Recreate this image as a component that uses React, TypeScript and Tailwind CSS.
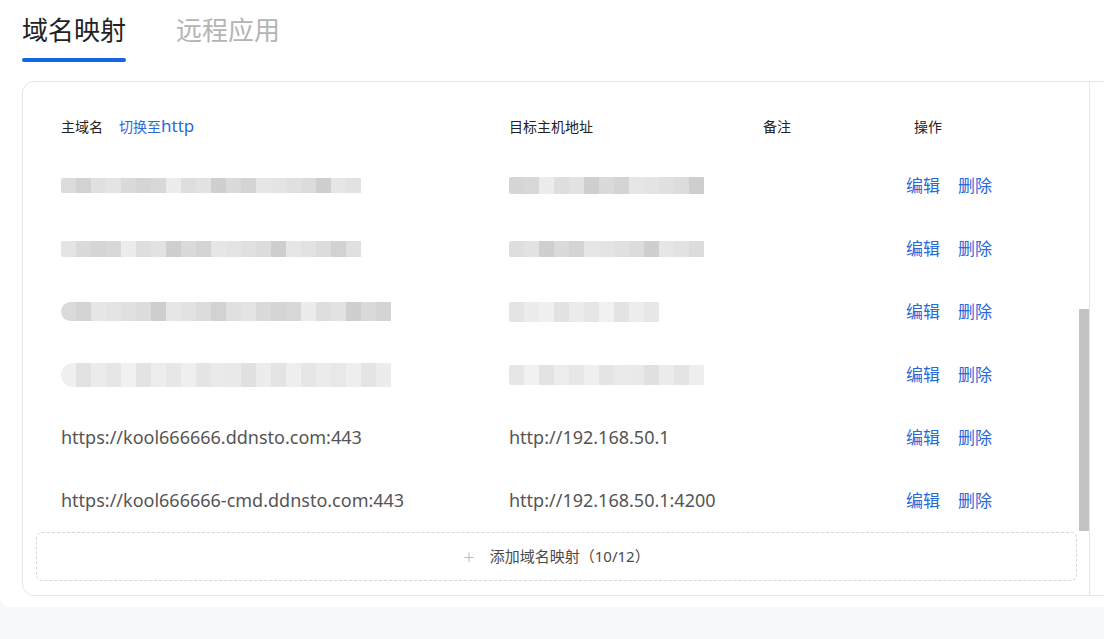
import React from "react";

const font = { fontFamily: '"Noto Sans", "Noto Sans CJK SC", sans-serif' };

// mosaic cells standing in for the blurred entries
const shadesA = ["bg-[#dcdcdc]", "bg-[#d2d2d2]", "bg-[#e0e0e0]", "bg-[#e4e4e4]", "bg-[#dadada]", "bg-[#d5d5d5]", "bg-[#d8d8d8]", "bg-[#ececec]", "bg-[#dedede]", "bg-[#e2e2e2]", "bg-[#cfcfcf]", "bg-[#dadada]", "bg-[#d4d4d4]", "bg-[#e6e6e6]", "bg-[#e4e4e4]", "bg-[#e0e0e0]", "bg-[#dcdcdc]", "bg-[#cecece]", "bg-[#e6e6e6]", "bg-[#e2e2e2]"];
const shadesB = ["bg-[#e8e8e8]", "bg-[#eeeeee]", "bg-[#e4e4e4]", "bg-[#ececec]", "bg-[#f0f0f0]", "bg-[#e2e2e2]", "bg-[#ebebeb]", "bg-[#e6e6e6]", "bg-[#f1f1f1]", "bg-[#e3e3e3]", "bg-[#ededed]", "bg-[#e7e7e7]", "bg-[#efefef]", "bg-[#e5e5e5]", "bg-[#eaeaea]", "bg-[#e9e9e9]", "bg-[#e1e1e1]", "bg-[#ececec]", "bg-[#e4e4e4]", "bg-[#eeeeee]", "bg-[#e6e6e6]", "bg-[#ebebeb]"];

function Mosaic({ n, h, shades, offset = 0, round = false }: { n: number; h: string; shades: string[]; offset?: number; round?: boolean }) {
  return (
    <div className={`flex ${h} overflow-hidden blur-[0.5px] ${round ? "rounded-full" : "rounded-[2px]"}`}>
      {Array.from({ length: n }).map((_, i) => (
        <div key={i} className={`w-[15px] h-full ${shades[(i + offset) % shades.length]}`} />
      ))}
    </div>
  );
}

type Row = { domain: React.ReactNode; target: React.ReactNode };

const rows: Row[] = [
  { domain: <Mosaic n={20} h="h-[15px]" shades={shadesA} />, target: <Mosaic n={13} h="h-[17px]" shades={shadesA} offset={5} /> },
  { domain: <Mosaic n={20} h="h-[16px]" shades={shadesA} offset={3} />, target: <Mosaic n={13} h="h-[16px]" shades={shadesA} offset={8} /> },
  { domain: <Mosaic n={22} h="h-[19px]" shades={shadesA} offset={11} round />, target: <Mosaic n={10} h="h-[20px]" shades={shadesB} offset={2} /> },
  { domain: <Mosaic n={22} h="h-[24px]" shades={shadesB} offset={4} round />, target: <Mosaic n={13} h="h-[20px]" shades={shadesB} offset={7} /> },
  { domain: "https://kool666666.ddnsto.com:443", target: "http://192.168.50.1" },
  { domain: "https://kool666666-cmd.ddnsto.com:443", target: "http://192.168.50.1:4200" },
];

export default function App() {
  return (
    <div className="min-h-[639px] bg-[#f6f8fc] overflow-hidden" style={font}>
      <div className="bg-white h-[607px] rounded-bl-[10px]">
        {/* tabs */}
        <div className="flex gap-[50px] pl-[22px] h-[81px]">
          <div className="flex flex-col pt-[11px]">
            <span className="text-[26px] leading-[38px] text-[#222]">域名映射</span>
            <div className="mt-[9px] h-[4px] rounded-full bg-[#1366ea]" />
          </div>
          <div className="pt-[11px]">
            <span className="text-[26px] leading-[38px] text-[#b4b4b4]">远程应用</span>
          </div>
        </div>

        {/* card */}
        <div className="ml-[22px] mr-[-30px] h-[515px] border border-[#e6e6e6] rounded-l-[12px] flex">
          <div className="relative w-[1067px] border-r border-[#e6e6e6] pl-[13px] pr-[12px] pt-[16px]">
            <div className="pl-[25px]">
              <div className="grid grid-cols-[448px_254px_143px_1fr] h-[56px] items-center text-[14px] text-[#222]">
                <div className="flex items-baseline gap-[16px]">
                  <span>主域名</span>
                  <span className="text-[#2a6ad8]">
                    切换至<span className="text-[17px]">http</span>
                  </span>
                </div>
                <div>目标主机地址</div>
                <div>备注</div>
                <div className="pl-[8px]">操作</div>
              </div>
              {rows.map((r, i) => (
                <div key={i} className="grid grid-cols-[448px_254px_143px_1fr] h-[63px] items-center text-[18px] text-[#555]">
                  <div>{r.domain}</div>
                  <div>{r.target}</div>
                  <div />
                  <div className="flex gap-[18px] text-[17px] text-[#2a6ad8]">
                    <span>编辑</span>
                    <span>删除</span>
                  </div>
                </div>
              ))}
            </div>
            <button className="w-full h-[49px] border border-dashed border-[#d6d6d6] rounded-[6px] flex items-center justify-center gap-[15px] text-[15px] text-[#4a4a4a]">
              <span className="text-[#bdbdbd] text-[20px] leading-none font-light">+</span>
              <span>添加域名映射（10/12）</span>
            </button>
            {/* scrollbar thumb */}
            <div className="absolute right-0 top-[227px] w-[10px] h-[222px] bg-[#c4c4c4]" />
          </div>
        </div>
      </div>
    </div>
  );
}
